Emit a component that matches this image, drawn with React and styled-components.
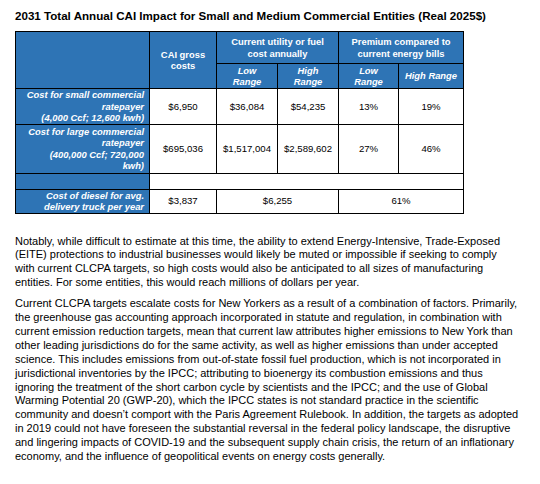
import React from 'react';
import styled, { createGlobalStyle } from 'styled-components';

const GlobalStyle = createGlobalStyle`
  body {
    margin: 0;
    background: #ffffff;
    font-family: "Liberation Sans", Arial, sans-serif;
    color: #000000;
  }
`;

const Page = styled.div`
  width: 504px;
  padding: 9px 0 0 15px;
`;

const Title = styled.h3`
  margin: 0 0 8px;
  font-size: 11.6px;
  line-height: 14px;
  font-weight: bold;
`;

const Table = styled.table`
  width: 448px;
  table-layout: fixed;
  border-collapse: collapse;
  font-size: 9.4px;
  line-height: 11.5px;
`;

const Row = styled.tr`
  height: ${({ h }) => h}px;
`;

const HeadCell = styled.th`
  background: #2e74b5;
  color: #ffffff;
  border: 1px solid #000000;
  padding: 0 2px;
  text-align: center;
  vertical-align: middle;
  font-weight: bold;
  font-style: ${({ sub }) => (sub ? 'italic' : 'normal')};
  white-space: nowrap;
`;

const LabelCell = styled.th`
  background: #2e74b5;
  color: #ffffff;
  border: 1px solid #000000;
  padding: 0 5px 0 3px;
  text-align: right;
  vertical-align: middle;
  font-weight: bold;
  font-style: italic;
  white-space: nowrap;
`;

const Cell = styled.td`
  border: 1px solid #000000;
  padding: 0 2px;
  text-align: center;
  vertical-align: middle;
  white-space: nowrap;
  font-size: 9.6px;
`;

const Text = styled.p`
  margin: ${({ first }) => (first ? '21px' : '0')} 0 7px;
  font-size: 11px;
  line-height: 13.9px;
`;

const rows = [
  {
    label: ['Cost for small commercial', 'ratepayer', '(4,000 Ccf; 12,600 kwh)'],
    h: 35,
    values: ['$6,950', '$36,084', '$54,235', '13%', '19%'],
  },
  {
    label: ['Cost for large commercial', 'ratepayer', '(400,000 Ccf; 720,000', 'kwh)'],
    h: 49,
    values: ['$695,036', '$1,517,004', '$2,589,602', '27%', '46%'],
  },
];

const Lines = ({ lines }) =>
  lines.map((l, i) => (
    <React.Fragment key={i}>
      {i > 0 && <br />}
      {l}
    </React.Fragment>
  ));

export default function App() {
  return (
    <>
      <GlobalStyle />
      <Page>
        <Title>2031 Total Annual CAI Impact for Small and Medium Commercial Entities (Real 2025$)</Title>
        <Table>
          <colgroup>
            <col style={{ width: 134 }} />
            <col style={{ width: 67 }} />
            <col style={{ width: 61 }} />
            <col style={{ width: 61 }} />
            <col style={{ width: 60 }} />
            <col style={{ width: 65 }} />
          </colgroup>
          <thead>
            <Row h={32}>
              <HeadCell rowSpan={2} />
              <HeadCell rowSpan={2}>
                <Lines lines={['CAI gross', 'costs']} />
              </HeadCell>
              <HeadCell colSpan={2}>
                <Lines lines={['Current utility or fuel', 'cost annually']} />
              </HeadCell>
              <HeadCell colSpan={2}>
                <Lines lines={['Premium compared to', 'current energy bills']} />
              </HeadCell>
            </Row>
            <Row h={25}>
              <HeadCell sub>
                <Lines lines={['Low', 'Range']} />
              </HeadCell>
              <HeadCell sub>
                <Lines lines={['High', 'Range']} />
              </HeadCell>
              <HeadCell sub>
                <Lines lines={['Low', 'Range']} />
              </HeadCell>
              <HeadCell sub>High Range</HeadCell>
            </Row>
          </thead>
          <tbody>
            {rows.map((r) => (
              <Row h={r.h} key={r.label[0]}>
                <LabelCell>
                  <Lines lines={r.label} />
                </LabelCell>
                {r.values.map((v) => (
                  <Cell key={v}>{v}</Cell>
                ))}
              </Row>
            ))}
            <Row h={16}>
              <LabelCell />
              <Cell colSpan={5} />
            </Row>
            <Row h={24}>
              <LabelCell>
                <Lines lines={['Cost of diesel for avg.', 'delivery truck per year']} />
              </LabelCell>
              <Cell>$3,837</Cell>
              <Cell colSpan={2}>$6,255</Cell>
              <Cell colSpan={2}>61%</Cell>
            </Row>
          </tbody>
        </Table>
        <Text first>
          Notably, while difficult to estimate at this time, the ability to extend Energy-Intensive, Trade-Exposed
          (EITE) protections to industrial businesses would likely be muted or impossible if seeking to comply
          with current CLCPA targets, so high costs would also be anticipated to all sizes of manufacturing
          entities. For some entities, this would reach millions of dollars per year.
        </Text>
        <Text>
          Current CLCPA targets escalate costs for New Yorkers as a result of a combination of factors. Primarily,
          the greenhouse gas accounting approach incorporated in statute and regulation, in combination with
          current emission reduction targets, mean that current law attributes higher emissions to New York than
          other leading jurisdictions do for the same activity, as well as higher emissions than under accepted
          science. This includes emissions from out-of-state fossil fuel production, which is not incorporated in
          jurisdictional inventories by the IPCC; attributing to bioenergy its combustion emissions and thus
          ignoring the treatment of the short carbon cycle by scientists and the IPCC; and the use of Global
          Warming Potential 20 (GWP-20), which the IPCC states is not standard practice in the scientific
          community and doesn’t comport with the Paris Agreement Rulebook. In addition, the targets as adopted
          in 2019 could not have foreseen the substantial reversal in the federal policy landscape, the disruptive
          and lingering impacts of COVID-19 and the subsequent supply chain crisis, the return of an inflationary
          economy, and the influence of geopolitical events on energy costs generally.
        </Text>
      </Page>
    </>
  );
}
